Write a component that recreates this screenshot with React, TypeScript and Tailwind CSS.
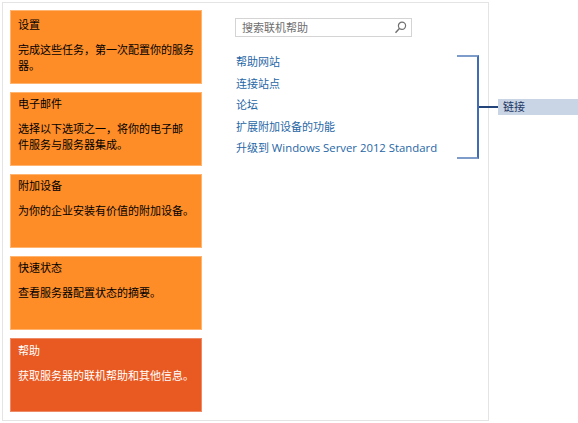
import React from "react";

const cards = [
  {
    title: "设置",
    lines: ["完成这些任务，第一次配置你的服务", "器。"],
    first: true,
  },
  {
    title: "电子邮件",
    lines: ["选择以下选项之一，将你的电子邮", "件服务与服务器集成。"],
  },
  { title: "附加设备", lines: ["为你的企业安装有价值的附加设备。"] },
  { title: "快速状态", lines: ["查看服务器配置状态的摘要。"] },
  { title: "帮助", lines: ["获取服务器的联机帮助和其他信息。"], active: true },
];

const links = ["帮助网站", "连接站点", "论坛", "扩展附加设备的功能"];

const SearchIcon = () => (
  <svg width="13" height="13" viewBox="0 0 13 13" fill="none" className="shrink-0">
    <circle cx="8" cy="4.8" r="3.6" stroke="#707070" strokeWidth="1.2" />
    <line x1="5.4" y1="7.5" x2="1.5" y2="11.8" stroke="#707070" strokeWidth="1.4" />
  </svg>
);

export default function App() {
  return (
    <div
      className="relative w-[578px] h-[423px] bg-white text-[11px] leading-[16px]"
      style={{ fontFamily: '"Open Sans", "Noto Sans CJK SC", sans-serif' }}
    >
      <div className="ml-[2px] pt-[2px]">
        <div className="w-[487px] h-[419px] border border-[#e4e4e4] p-[7px] flex">
          {/* tiles */}
          <div className="w-[192px] flex flex-col gap-[8px]">
            {cards.map((c) => (
              <div
                key={c.title}
                className={
                  c.active
                    ? "h-[74px] border border-[#ef8a66] bg-[#e85a22] text-white px-[7px] pt-[4px]"
                    : c.first
                    ? "h-[74px] border border-[#ffb56f] bg-[#fe8c27] text-black px-[7px] pt-[6px]"
                    : "h-[74px] border border-[#ffb56f] bg-[#fe8c27] text-black px-[7px] pt-[3px]"
                }
              >
                <div>{c.title}</div>
                <div className="mt-[9px]">
                  {c.lines.map((l) => (
                    <div key={l} className="whitespace-nowrap">
                      {l}
                    </div>
                  ))}
                </div>
              </div>
            ))}
          </div>

          {/* links */}
          <div className="ml-[33px] pt-[8px]">
            <div className="w-[177px] h-[19px] border border-[#d4d4d4] flex items-center justify-between pl-[6px] pr-[4px]">
              <span className="text-[#6e6e6e]">搜索联机帮助</span>
              <SearchIcon />
            </div>
            <div className="mt-[17px] flex flex-col gap-[5.5px] pl-[1px]">
              {links.map((l) => (
                <a key={l} href="#" className="text-[#1f67a6] whitespace-nowrap">
                  {l}
                </a>
              ))}
              <a href="#" className="text-[#1f67a6] whitespace-nowrap">
                升级到 <span className="text-[11.35px]">Windows Server 2012 Standard</span>
              </a>
            </div>
          </div>
        </div>
      </div>

      {/* callout bracket */}
      <div className="absolute left-[457px] top-[55px] w-[22px] h-[104px] border-t-2 border-b-2 border-r-2 border-t-[#7d9cc9] border-b-[#7d9cc9] border-r-[#3f6cb2]" />
      <div className="absolute left-[479px] top-[106px] w-[20px] h-[2px] bg-[#24457c]" />
      <div className="absolute left-[498px] top-[99px] w-[80px] h-[16px] bg-[#c9d5e4] pl-[5px] text-[#1f3864]">
        链接
      </div>
    </div>
  );
}
